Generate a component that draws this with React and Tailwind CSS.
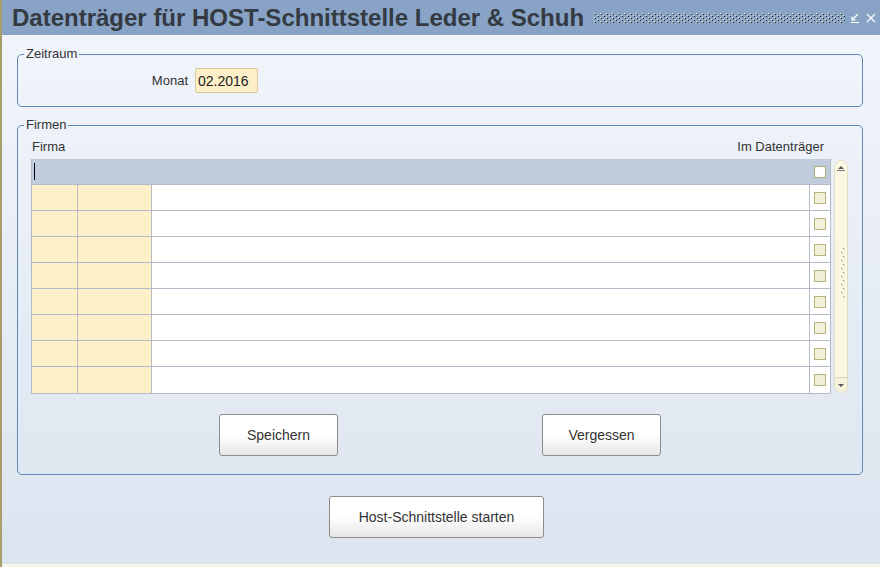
import { useState } from 'react'

const rows = Array.from({ length: 8 }, (_, i) => i)

function Checkbox({ white }) {
  return (
    <span
      className={`block h-[12px] w-[12px] border ${white ? 'border-[#adad78] bg-white' : 'border-[#b4b47a] bg-[#f1f1d9]'}`}
    />
  )
}

function GridRow({ first, last }) {
  const line = last ? '' : 'border-b border-[#b3b9c9]'
  if (first) {
    return (
      <div className={`flex h-[26px] bg-[#c0ccdc] ${line}`}>
        <div className="flex w-[46px] items-center pl-[2px]">
          <span className="block h-[17px] w-[1px] bg-black" />
        </div>
        <div className="w-[74px]" />
        <div className="flex-1" />
        <div className="flex w-[20px] items-center justify-center">
          <Checkbox white />
        </div>
      </div>
    )
  }
  return (
    <div className={`flex h-[26px] ${line}`}>
      <div className="w-[46px] border-r border-[#b9bcc2] bg-[#fdf0c8]" />
      <div className="w-[74px] border-r border-[#b9bcc2] bg-[#fdf0c8]" />
      <div className="flex-1 border-r border-[#b9bcc2] bg-white" />
      <div className="flex w-[20px] items-center justify-center bg-white">
        <Checkbox />
      </div>
    </div>
  )
}

function Scrollbar() {
  return (
    <div className="ml-[3px] mt-[1px] flex h-[233px] w-[14px] flex-col justify-between rounded-[7px] border border-[#e2dec0] bg-[#faf7e2]">
      <div className="flex flex-col items-center pt-[4px]">
        <svg width="8" height="6" viewBox="0 0 8 6">
          <path d="M1 4 L4 1 L7 4 Z" fill="#555" />
          <rect x="0" y="5" width="8" height="1" fill="#777" />
        </svg>
      </div>
      <div className="flex justify-end pr-[1px]">
        <svg width="6" height="52" viewBox="0 0 6 52">
          {Array.from({ length: 13 }, (_, i) => (
            <g key={i}>
              <rect x={i % 2 ? 1 : 3} y={i * 4} width="1" height="1" fill="#8a8a70" />
              <rect x={i % 2 ? 2 : 4} y={i * 4 + 1} width="1" height="1" fill="#d8d6b8" />
            </g>
          ))}
        </svg>
      </div>
      <div className="flex h-[15px] items-center justify-center rounded-b-[7px] border-t border-[#d8d4b4] bg-[#f6f3dc]">
        <svg width="8" height="5" viewBox="0 0 8 5">
          <path d="M1 1 L4 4 L7 1 Z" fill="#555" />
        </svg>
      </div>
    </div>
  )
}

function Button({ children, className }) {
  return (
    <button
      className={`h-[42px] rounded-[3px] border border-[#8c8c8c] bg-gradient-to-b from-white via-white to-[#e6e6e6] text-[14px] text-[#333] ${className}`}
    >
      {children}
    </button>
  )
}

export default function App() {
  const [monat, setMonat] = useState('02.2016')

  return (
    <div className="flex h-[567px] w-[880px] flex-col border-l-2 border-[#a89e6c] bg-[#f8f8ec] font-['Liberation_Sans',Arial,sans-serif] text-[#333]">
      <div className="flex h-[35px] shrink-0 items-center bg-[#88a3c5] pl-[10px] pr-[4px]">
        <h1 className="shrink-0 whitespace-nowrap text-[24px] font-bold leading-none text-[#333a42]">
          Datenträger für HOST-Schnittstelle Leder &amp; Schuh
        </h1>
        <svg className="ml-[10px] mt-[1px] min-w-0 flex-1" height="10">
          <defs>
            <pattern id="dots" width="6" height="4" patternUnits="userSpaceOnUse">
              <rect x="0" y="0" width="1" height="1" fill="#e8e6b0" />
              <rect x="1" y="1" width="1" height="1" fill="#1e1e1e" />
              <rect x="3" y="2" width="1" height="1" fill="#e8e6b0" />
              <rect x="4" y="3" width="1" height="1" fill="#1e1e1e" />
            </pattern>
          </defs>
          <rect width="100%" height="10" fill="url(#dots)" />
        </svg>
        <svg className="ml-[5px] shrink-0" width="10" height="10" viewBox="0 0 10 10">
          <path d="M8 1 L2 7 M2 3.5 L2 7 L5.5 7" stroke="#fff" strokeWidth="1.2" fill="none" />
          <path d="M1 9.5 L9 9.5" stroke="#fff" strokeWidth="1" />
        </svg>
        <svg className="ml-[6px] shrink-0" width="10" height="10" viewBox="0 0 10 10">
          <path d="M1 1 L9 9 M9 1 L1 9" stroke="#fff" strokeWidth="1.2" />
        </svg>
      </div>

      <div className="flex min-h-0 flex-1 flex-col bg-gradient-to-b from-[#f1f5fb] to-[#dce4ef] pl-[15px] pr-[17px] pt-[12px] text-[13px]">
        <fieldset className="rounded-[5px] border border-[#6088b8] pb-[13px]">
          <legend className="ml-[6px] px-[2px] leading-[14px]">Zeitraum</legend>
          <div className="mt-[7px] flex items-center">
            <div className="w-[170px] text-right">Monat</div>
            <input
              value={monat}
              onChange={(e) => setMonat(e.target.value)}
              className="ml-[7px] h-[25px] w-[63px] rounded-[2px] border border-[#d6c99a] bg-[#fdf0c8] pl-[2px] text-[14px] text-[#222] outline-none"
            />
          </div>
        </fieldset>

        <fieldset className="mt-[11px] rounded-[5px] border border-[#6088b8] pb-[18px]">
          <legend className="ml-[6px] px-[2px] leading-[14px]">Firmen</legend>
          <div className="ml-[13px] mr-[34px] mt-[7px] flex h-[16px] items-center justify-between leading-[16px]">
            <span className="pl-[1px]">Firma</span>
            <span className="pr-[4px]">Im Datenträger</span>
          </div>
          <div className="ml-[13px] mt-[4px] flex">
            <div className="w-[800px] border-x border-b border-[#b3b9c9]">
              {[-1, ...rows].map((r) => (
                <GridRow key={r} first={r === -1} last={r === rows.length - 1} />
              ))}
            </div>
            <Scrollbar />
          </div>
          <div className="mt-[20px] flex pl-[201px]">
            <Button className="w-[119px]">Speichern</Button>
            <Button className="ml-[204px] w-[119px]">Vergessen</Button>
          </div>
        </fieldset>

        <div className="mt-[21px] pl-[312px]">
          <Button className="w-[215px]">Host-Schnittstelle starten</Button>
        </div>
      </div>
      <div className="h-[3px] shrink-0 bg-[#f6f6e8]" />
    </div>
  )
}
